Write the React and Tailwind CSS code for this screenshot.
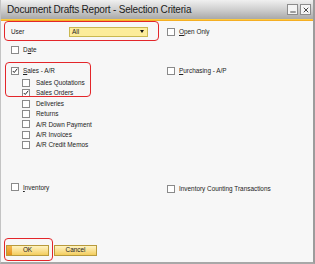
import { Minus, X } from "lucide-react";

function Box({ checked }) {
  return (
    <span className="relative box-border h-[8px] w-[8px] shrink-0 border border-[#8a8a8a] bg-white">
      {checked ? (
        <svg viewBox="0 0 8 8" className="absolute left-0 top-0 h-[6px] w-[6px]">
          <path d="M1 4 L3 6 L7 1" fill="none" stroke="#222" strokeWidth="1.3" />
        </svg>
      ) : null}
    </span>
  );
}

function Check({ label, checked, className = "" }) {
  return (
    <div className={"flex h-[10.4px] items-center " + className}>
      <Box checked={checked} />
      <span className="ml-[4px] whitespace-nowrap">{label}</span>
    </div>
  );
}

const subItems = [
  ["Sales Quotations", false],
  ["Sales Orders", true],
  ["Deliveries", false],
  ["Returns", false],
  ["A/R Down Payment", false],
  ["A/R Invoices", false],
  ["A/R Credit Memos", false],
];

export default function App() {
  return (
    <div
      className="relative flex h-[264px] w-[315px] flex-col overflow-hidden border-r-2 border-l border-b-2 border-l-[#c4c4c4] border-r-[#9c9c9c] border-b-[#a8a8a8] bg-[#f7f7f7] text-[6.4px] text-[#222]"
      style={{ fontFamily: '"Liberation Sans", Arial, sans-serif' }}
    >
      {/* title bar */}
      <div className="flex h-[19px] shrink-0 items-center bg-gradient-to-b from-[#f0f0f0] via-[#cfcfcf] to-[#a9a9a9] pl-[6px] pr-[2px]">
        <span className="text-[10px] tracking-[-0.2px] text-[#1b1b1b]">Document Drafts Report - Selection Criteria</span>
        <div className="ml-auto flex gap-[2px]">
          <span className="grid h-[11px] w-[11px] place-content-center border border-[#8c8c8c] bg-[#f4f4f4]">
            <Minus className="mt-[4px] h-[8px] w-[8px] text-[#444]" strokeWidth={3} />
          </span>
          <span className="grid h-[11px] w-[11px] place-content-center border border-[#8c8c8c] bg-[#f4f4f4]">
            <X className="h-[8px] w-[8px] text-[#444]" strokeWidth={3} />
          </span>
        </div>
      </div>
      <div className="h-[2px] shrink-0 bg-gradient-to-b from-[#ffd84a] to-[#f0a010]" />

      {/* body */}
      <div className="flex flex-1 flex-col pl-[10px]">
        <div className="mt-[5px] grid h-[11px] grid-cols-[156px_1fr] items-center">
          <div className="flex items-center">
            <span className="w-[58px]">User</span>
            <div className="box-border flex h-[10px] w-[79px] items-center border border-[#c9b850] bg-[#fcec9a] pl-[2px] pr-[3px]">
              <span>All</span>
              <span className="ml-auto h-0 w-0 border-x-[2.5px] border-t-[3px] border-x-transparent border-t-[#111]" />
            </div>
          </div>
          <Check className="mt-[1px]" label={<><span className="underline">O</span>pen Only</>} />
        </div>

        <div className="mt-[8px]">
          <Check label={<>D<span className="underline">a</span>te</>} />
        </div>

        <div className="mt-[10.6px] grid grid-cols-[156px_1fr]">
          <div>
            <Check checked label={<><span className="underline">S</span>ales - A/R</>} />
            <div className="mt-[1.2px] pl-[11px]">
              {subItems.map(([l, c]) => (
                <div key={l} className="flex h-[10.4px] items-center">
                  <Box checked={c} />
                  <span className="ml-[6px] whitespace-nowrap">{l}</span>
                </div>
              ))}
            </div>
          </div>
          <div>
            <Check label={<><span className="underline">P</span>urchasing - A/P</>} />
          </div>
        </div>

        <div className="mt-[32px] grid grid-cols-[156px_1fr]">
          <Check label={<><span className="underline">I</span>nventory</>} />
          <Check className="mt-[1.5px]" label="Inventory Counting Transactions" />
        </div>

        <div className="mt-auto mb-[6px] -ml-[5px] flex gap-[5px]">
          <button className="relative box-border h-[11px] w-[43px] overflow-hidden border border-[#b89a3c] bg-gradient-to-b from-[#fff3c0] to-[#f3cd5c] text-[6.4px] leading-none text-[#222]">
            <span className="absolute left-0 top-0 h-full w-[5px] bg-gradient-to-b from-[#f6b84a] to-[#e0901a]" />
            OK
          </button>
          <button className="box-border h-[11px] w-[43px] border border-[#b89a3c] bg-gradient-to-b from-[#fff3c0] to-[#f3cd5c] text-[6.4px] leading-none text-[#222]">
            Cancel
          </button>
        </div>
      </div>

      {/* annotation outlines */}
      <div className="pointer-events-none absolute left-[3px] top-[21px] h-[20px] w-[155px] rounded-[4px] border-[1.5px] border-[#e3262a]" />
      <div className="pointer-events-none absolute left-[4px] top-[62px] h-[35px] w-[86px] rounded-[4px] border-[1.5px] border-[#e3262a]" />
      <div className="pointer-events-none absolute left-[3px] top-[238px] h-[23px] w-[49px] rounded-[4px] border-[1.5px] border-[#e3262a]" />
    </div>
  );
}
